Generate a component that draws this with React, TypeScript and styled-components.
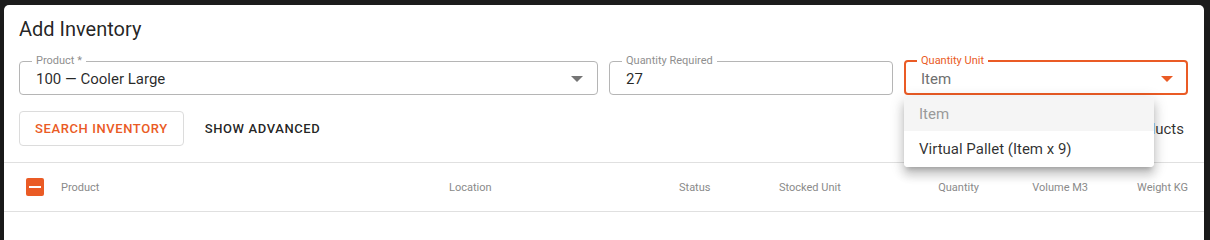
import React from 'react';
import styled, { createGlobalStyle } from 'styled-components';

const accent = '#ea5b25';

const GlobalStyle = createGlobalStyle`
  html, body {
    margin: 0;
    padding: 0;
    background: #1d1d1d;
    font-family: Roboto, "Liberation Sans", Arial, sans-serif;
  }
`;

const Backdrop = styled.div`
  display: flex;
  flex-direction: column;
  height: 100vh;
  min-height: 220px;
  overflow: hidden;
  padding: 5px 6px 0 4px;
  box-sizing: border-box;
  background: #1d1d1d;
`;

const Dialog = styled.div`
  position: relative;
  flex: 1;
  background: #fff;
  border-radius: 5px 5px 0 0;
  box-shadow: 0 11px 15px -7px rgba(0, 0, 0, 0.2), 0 24px 38px 3px rgba(0, 0, 0, 0.14);
`;

const Head = styled.div`
  padding: 10px 16px 0 15px;
`;

const Title = styled.h2`
  margin: 0;
  font-size: 20px;
  line-height: 28px;
  font-weight: 400;
  color: rgba(0, 0, 0, 0.87);
`;

const FieldRow = styled.div`
  display: grid;
  grid-template-columns: 579fr 284fr 284fr;
  gap: 11px;
  margin-top: 12px;
`;

const FieldWrap = styled.div`
  position: relative;
  min-width: 0;
`;

const Outline = styled.fieldset<{ $focused?: boolean }>`
  margin: 0;
  min-width: 0;
  box-sizing: border-box;
  height: 40px;
  border-radius: 4px;
  border: ${(p) => (p.$focused ? `2px solid ${accent}` : '1px solid #b5b5b5')};
  padding: ${(p) => (p.$focused ? '0 11px 0 15px' : '0 12px 0 16px')};
`;

const Legend = styled.legend<{ $focused?: boolean }>`
  font-size: 11px;
  line-height: 12px;
  padding: 0 4px;
  margin-left: -4px;
  color: ${(p) => (p.$focused ? accent : '#8f8f8f')};
`;

const Value = styled.div<{ $muted?: boolean }>`
  display: flex;
  align-items: center;
  justify-content: space-between;
  height: 24px;
  font-size: 15px;
  color: ${(p) => (p.$muted ? '#6f6f6f' : 'rgba(0, 0, 0, 0.85)')};
  white-space: nowrap;
`;

const Arrow = styled.span<{ $focused?: boolean }>`
  width: 0;
  height: 0;
  margin-right: 2px;
  border-left: 6px solid transparent;
  border-right: 6px solid transparent;
  border-top: 6px solid ${(p) => (p.$focused ? accent : '#757575')};
`;

const Menu = styled.ul`
  position: absolute;
  left: 0;
  top: calc(100% + 2px);
  width: 250px;
  margin: 0;
  padding: 0;
  list-style: none;
  background: #fff;
  border-radius: 4px;
  overflow: hidden;
  box-shadow: 0 5px 5px -3px rgba(0, 0, 0, 0.2), 0 8px 10px 1px rgba(0, 0, 0, 0.14), 0 3px 14px 2px rgba(0, 0, 0, 0.12);
  z-index: 2;
`;

const MenuItem = styled.li<{ $selected?: boolean }>`
  height: ${(p) => (p.$selected ? '34px' : '36px')};
  display: flex;
  align-items: center;
  padding: 0 15px;
  font-size: 15px;
  background: ${(p) => (p.$selected ? '#f5f5f5' : '#fff')};
  color: ${(p) => (p.$selected ? '#9a9a9a' : 'rgba(0, 0, 0, 0.82)')};
`;

const Actions = styled.div`
  display: flex;
  align-items: center;
  gap: 13px;
  margin-top: 16px;
  height: 35px;
`;

const Button = styled.button<{ $outlined?: boolean }>`
  height: 35px;
  box-sizing: border-box;
  padding: ${(p) => (p.$outlined ? '0 15px' : '0 8px')};
  font-family: inherit;
  font-size: 13px;
  font-weight: 500;
  letter-spacing: 0.6px;
  text-transform: uppercase;
  background: #fff;
  border-radius: 4px;
  border: ${(p) => (p.$outlined ? '1px solid #dcdcdc' : 'none')};
  color: ${(p) => (p.$outlined ? accent : 'rgba(0, 0, 0, 0.87)')};
`;

const Count = styled.span`
  margin-left: auto;
  margin-right: 4px;
  font-size: 15px;
  color: rgba(0, 0, 0, 0.82);
`;

const TableHead = styled.div`
  display: grid;
  grid-template-columns: 42px 388px 230px 100px 100px 100px 109px 100px;
  align-items: center;
  height: 48px;
  margin-top: 16px;
  padding: 0 16px 0 15px;
  border-top: 1px solid #e0e0e0;
  border-bottom: 1px solid #e0e0e0;
`;

const Cell = styled.div<{ $right?: boolean }>`
  font-size: 11px;
  color: #8a8a8a;
  text-align: ${(p) => (p.$right ? 'right' : 'left')};
  white-space: nowrap;
`;

const Check = styled.span`
  display: flex;
  align-items: center;
  justify-content: center;
  width: 18px;
  height: 18px;
  margin-left: 7px;
  border-radius: 2px;
  background: ${accent};

  &::after {
    content: '';
    width: 12px;
    height: 2px;
    background: #fff;
  }
`;

type FieldProps = {
  label: string;
  value: string;
  select?: boolean;
  focused?: boolean;
  muted?: boolean;
  children?: React.ReactNode;
};

function Field({ label, value, select, focused, muted, children }: FieldProps) {
  return (
    <FieldWrap>
      <Outline $focused={focused}>
        <Legend $focused={focused}>{label}</Legend>
        <Value $muted={muted}>
          <span>{value}</span>
          {select && <Arrow $focused={focused} />}
        </Value>
      </Outline>
      {children}
    </FieldWrap>
  );
}

const columns = [
  { name: 'Product' },
  { name: 'Location' },
  { name: 'Status' },
  { name: 'Stocked Unit' },
  { name: 'Quantity', right: true },
  { name: 'Volume M3', right: true },
  { name: 'Weight KG', right: true },
];

export default function App() {
  return (
    <>
      <GlobalStyle />
      <Backdrop>
        <Dialog>
          <Head>
            <Title>Add Inventory</Title>
            <FieldRow>
              <Field label="Product *" value="100 — Cooler Large" select />
              <Field label="Quantity Required" value="27" />
              <Field label="Quantity Unit" value="Item" select focused muted>
                <Menu>
                  <MenuItem $selected>Item</MenuItem>
                  <MenuItem>Virtual Pallet (Item x 9)</MenuItem>
                </Menu>
              </Field>
            </FieldRow>
            <Actions>
              <Button $outlined>Search Inventory</Button>
              <Button>Show Advanced</Button>
              <Count>0 Products</Count>
            </Actions>
          </Head>
          <TableHead>
            <Check />
            {columns.map((c) => (
              <Cell key={c.name} $right={c.right}>
                {c.name}
              </Cell>
            ))}
          </TableHead>
        </Dialog>
      </Backdrop>
    </>
  );
}
